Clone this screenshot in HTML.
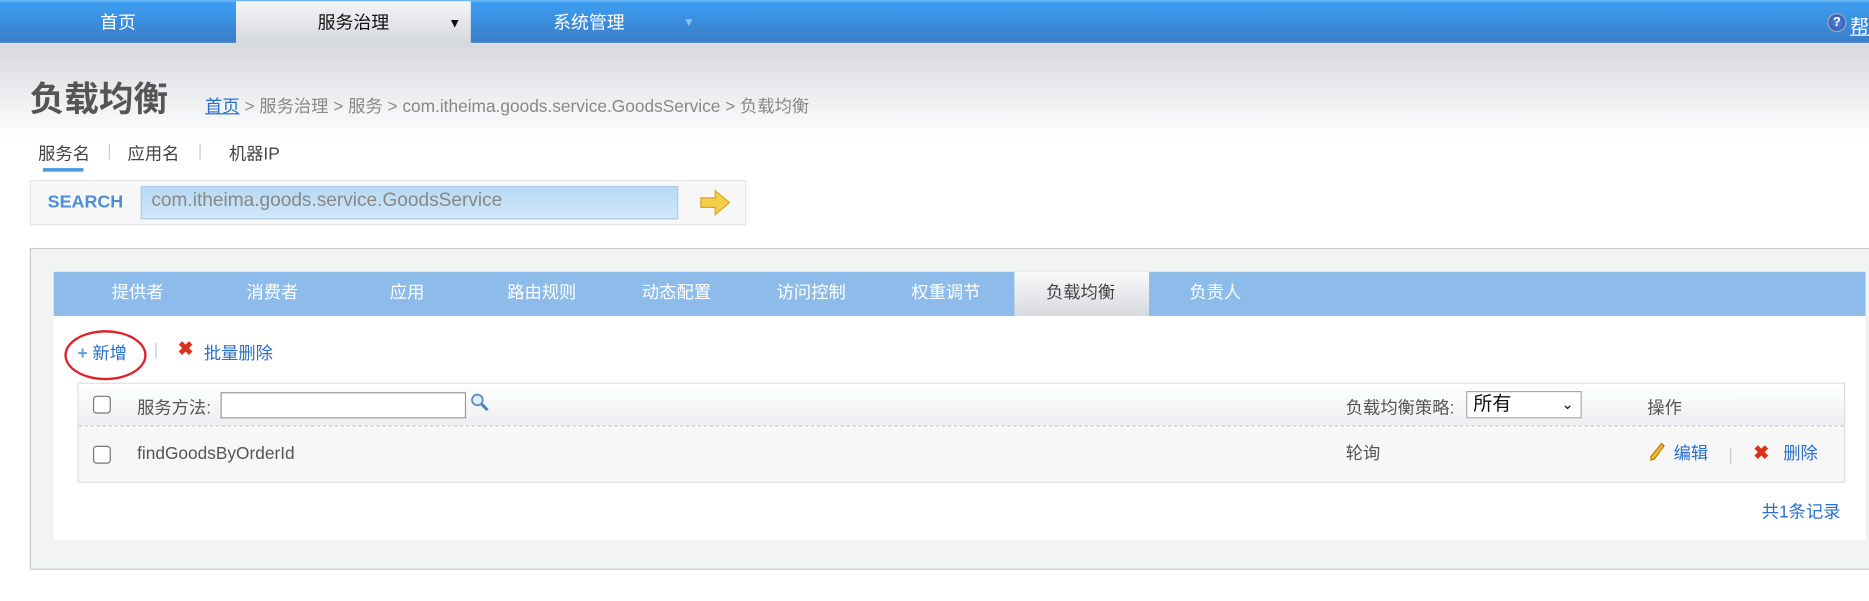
<!DOCTYPE html>
<html><head><meta charset="utf-8">
<style>
*{margin:0;padding:0;box-sizing:border-box}
html,body{width:1869px;height:601px;overflow:hidden;background:#fff}
#s{position:absolute;left:0;top:0;width:1568px;height:504px;transform:scale(1.192);transform-origin:0 0;font-family:"Liberation Sans","Noto Sans CJK SC",sans-serif;font-size:14px;color:#555}
.abs{position:absolute}
#nav{left:0;top:0;width:1568px;height:37px;background:linear-gradient(#3d9ff2,#3a7cc8);border-top:1px solid #6ab6f5;border-bottom:1px solid #d0dff0}
.ni{position:absolute;top:0;height:36px;line-height:38px;color:#fff;font-size:15px;text-align:center}
#top{left:0;top:37px;width:1568px;height:80px;background:linear-gradient(#d6d9de,#fff)}
a{color:#2a6fc9}
</style></head><body><div id="s">
<div id="nav" class="abs">
 <div class="ni" style="left:0;width:198px">首页</div>
 <div class="ni" style="left:198px;width:197px;height:38px;background:linear-gradient(#f4f5f7,#d2d6dc);color:#111">服务治理<span style="position:absolute;left:178px;font-size:11px">▼</span></div>
 <div class="ni" style="left:395px;width:198px">系统管理<span style="position:absolute;left:178px;font-size:10px;color:#8fc0f0">▼</span></div>
 <div class="abs" style="left:1533px;top:10px;width:16px;height:16px;border-radius:50%;background:radial-gradient(#5a86e0,#2a4fa8);border:1px solid #9ab;color:#fff;font-size:11px;line-height:14px;text-align:center;font-weight:bold">?</div>
 <div class="abs" style="left:1552px;top:8px;color:#fff;font-size:16px;text-decoration:underline">帮</div>
</div>
<div id="top" class="abs"></div>
<div class="abs" style="left:25px;top:60px;font-size:29px;font-weight:bold;color:#555">负载均衡</div>
<div class="abs" style="left:172px;top:78px;font-size:14.5px;color:#888"><a style="text-decoration:underline">首页</a> &gt; 服务治理 &gt; 服务 &gt; com.itheima.goods.service.GoodsService &gt; 负载均衡</div>
<div class="abs" style="left:32px;top:118px;font-size:14.5px;color:#444">服务名</div>
<div class="abs" style="left:90px;top:118px;color:#ccc">|</div>
<div class="abs" style="left:107px;top:118px;font-size:14.5px;color:#444">应用名</div>
<div class="abs" style="left:166px;top:118px;color:#ccc">|</div>
<div class="abs" style="left:192px;top:118px;font-size:14.5px;color:#444">机器IP</div>
<div class="abs" style="left:36px;top:141px;width:34px;height:3px;background:#4a9be0"></div>
<div class="abs" style="left:25px;top:151px;width:601px;height:38px;border:1px solid #e6e6e6;background:#f7f7f7"></div>
<div class="abs" style="left:40px;top:161px;font-size:15px;font-weight:bold;color:#4a8fd6">SEARCH</div>
<div class="abs" style="left:118px;top:156px;width:451px;height:28px;background:linear-gradient(#b8d8f2,#cfe8fa);border:1px solid #a9c9e4;color:#888;font-size:16px;padding:3px 8px">com.itheima.goods.service.GoodsService</div>
<svg class="abs" style="left:587px;top:159px" width="26" height="22" viewBox="0 0 26 22"><path d="M1 7h12V1l12 10-12 10v-6H1z" fill="#f6cf4a" stroke="#d9a520" stroke-width="1"/></svg>
<div class="abs" style="left:25px;top:208px;width:1560px;height:270px;background:#f2f3f3;border:1px solid #ccc"></div>
<div class="abs" style="left:45px;top:228px;width:1520px;height:225px;background:#fff"></div>
<div class="abs" style="left:45px;top:228px;width:1520px;height:37px;background:#8dbbea"></div>
<div class="abs" style="left:851px;top:228px;width:113px;height:37px;background:linear-gradient(#fafafa,#d6d9de)"></div>
<div class="abs" style="left:59px;top:228px;height:37px;line-height:36px;font-size:14.5px;color:#fff;display:flex">
 <span style="width:113px;text-align:center">提供者</span><span style="width:113px;text-align:center">消费者</span><span style="width:113px;text-align:center">应用</span><span style="width:113px;text-align:center">路由规则</span><span style="width:113px;text-align:center">动态配置</span><span style="width:113px;text-align:center">访问控制</span><span style="width:113px;text-align:center">权重调节</span><span style="width:113px;text-align:center;color:#444">负载均衡</span><span style="width:113px;text-align:center">负责人</span>
</div>
<div class="abs" style="left:54px;top:277px;width:69px;height:42px;border:2px solid #e0222a;border-radius:50%"></div>
<div class="abs" style="left:65px;top:285px;font-size:14.5px;color:#2a6fc9"><b style="color:#5aa0e0">+</b> 新增</div>
<div class="abs" style="left:129px;top:285px;color:#ccc">|</div>
<div class="abs" style="left:149px;top:283px;font-size:16px;font-weight:bold;color:#d9321c">✖</div>
<div class="abs" style="left:171px;top:285px;font-size:14.5px;color:#2a6fc9">批量删除</div>
<div class="abs" style="left:65px;top:321px;width:1483px;height:84px;border:1px solid #ddd"></div>
<div class="abs" style="left:66px;top:322px;width:1481px;height:36px;background:linear-gradient(#fff,#eceef1);border-bottom:1px dashed #ccc"></div>
<div class="abs" style="left:66px;top:359px;width:1481px;height:45px;background:#f7f7f7"></div>
<div class="abs" style="left:78px;top:332px;width:15px;height:15px;border:1px solid #777;border-radius:3px;background:#fff"></div>
<div class="abs" style="left:78px;top:374px;width:15px;height:15px;border:1px solid #777;border-radius:3px;background:#fff"></div>
<div class="abs" style="left:115px;top:331px;font-size:14.5px">服务方法:</div>
<div class="abs" style="left:185px;top:329px;width:206px;height:22px;border:1px solid #999;background:#fff"></div>
<svg class="abs" style="left:394px;top:329px" width="17" height="17"><circle cx="6.5" cy="6.5" r="4.5" fill="#dfeefa" stroke="#5b8fc0" stroke-width="1.5"/><path d="M10 10l5 5" stroke="#4a7fb5" stroke-width="2.5"/></svg>
<div class="abs" style="left:1129px;top:331px;font-size:14.5px">负载均衡策略:</div>
<div class="abs" style="left:1230px;top:328px;width:97px;height:23px;border:1px solid #aaa;background:#fff;color:#111;font-size:16px;padding:0 5px;line-height:21px">所有<span style="position:absolute;right:6px;top:0;font-size:12px">&#8964;</span></div>
<div class="abs" style="left:1382px;top:331px;font-size:14.5px">操作</div>
<div class="abs" style="left:115px;top:373px;font-size:14.5px;line-height:17px">findGoodsByOrderId</div>
<div class="abs" style="left:1129px;top:373px;font-size:14.5px;line-height:17px">轮询</div>
<svg class="abs" style="left:1383px;top:371px" width="14" height="16"><path d="M11 1l2 2-8 11-3 1 0-3z" fill="#f3b82c" stroke="#b07a10" stroke-width="1"/></svg>
<div class="abs" style="left:1404px;top:373px;font-size:14.5px;line-height:17px;color:#2a6fc9">编辑</div>
<div class="abs" style="left:1450px;top:373px;color:#ccc">|</div>
<div class="abs" style="left:1471px;top:370px;font-size:16px;font-weight:bold;color:#d9321c">✖</div>
<div class="abs" style="left:1496px;top:373px;font-size:14.5px;line-height:17px;color:#2a6fc9">删除</div>
<div class="abs" style="left:1478px;top:418px;font-size:14.5px;color:#2a6fc9">共1条记录</div>
</div></body></html>
